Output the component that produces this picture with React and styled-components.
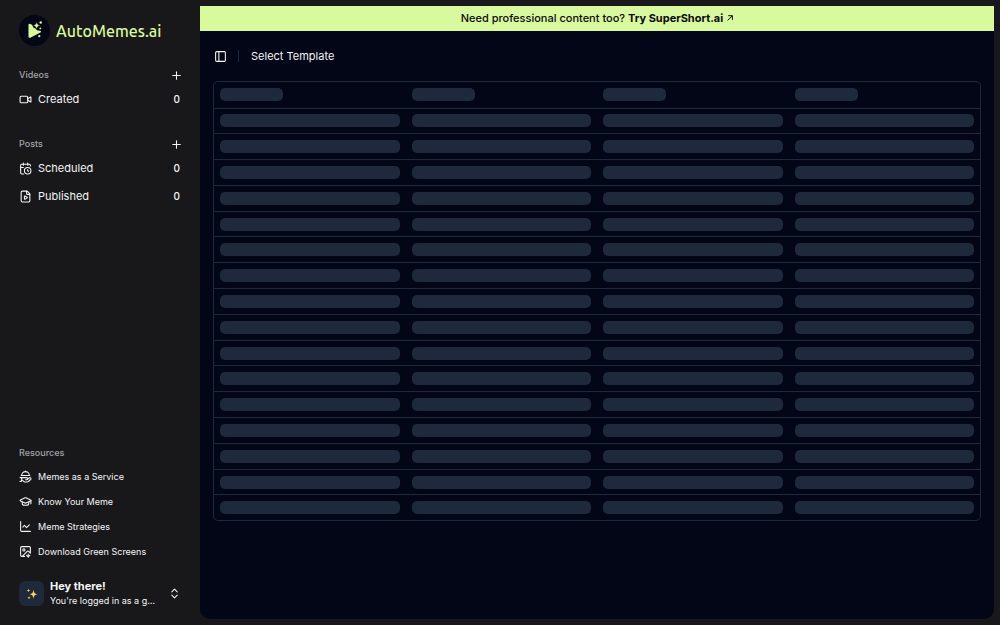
import React from 'react';
import styled, { createGlobalStyle } from 'styled-components';
import {
    CalendarClock,
    ChartLine,
    ChevronsUpDown,
    FilePlay,
    GraduationCap,
    HandPlatter,
    ImageDown,
    PanelLeft,
    Plus,
    Video,
} from 'lucide-react';

const colors = {
    sidebar: '#18181a',
    main: '#020616',
    lime: '#d9f99d',
    slate: '#1e293b',
    text: '#f4f4f5',
    muted: '#a3a3a8',
};

const GlobalStyle = createGlobalStyle`
*{
    box-sizing:border-box;
}

body{
    margin:0;
    background-color:${colors.sidebar};
    color:${colors.text};
    font-family:Inter, sans-serif;
    font-size:11px;
    line-height:16px;
}

a{
    color:inherit;
    text-decoration:none;
}

button{
    display:flex;
    align-items:center;
    padding:0;
    border:0;
    background:none;
    color:inherit;
    font:inherit;
    cursor:pointer;
}
`;

const Layout = styled.div`
display:flex;
min-height:100vh;
`;

const Sidebar = styled.aside`
display:flex;
flex-direction:column;
flex:none;
width:200px;
padding:15px 19px 17px;
`;

const Brand = styled.a`
display:flex;
align-items:center;
gap:6px;
margin-bottom:19px;
color:${colors.lime};
font-family:Ubuntu, "Noto Sans", sans-serif;
font-size:16px;
font-weight:500;
line-height:24px;

svg{
    flex:none;
}
`;

const Group = styled.nav`
margin-bottom:${props => props.$last ? '15px' : '21px'};
margin-top:${props => props.$last ? 'auto' : '0'};
`;

const GroupHeader = styled.div`
display:flex;
align-items:center;
justify-content:space-between;
height:20px;
margin-bottom:${props => props.$tight ? '1px' : '0'};
color:${colors.muted};
font-size:9px;
font-weight:500;

button{
    color:${colors.text};
    margin-right:-2px;
}
`;

const List = styled.ul`
list-style:none;
margin:0;
padding:0;
`;

const Item = styled.li`
height:${props => props.$small ? '25px' : '28px'};
font-size:${props => props.$small ? '9px' : '11px'};

a{
    display:flex;
    align-items:center;
    gap:6px;
    height:100%;
}

svg{
    flex:none;
}
`;

const Count = styled.span`
margin-left:auto;
margin-right:1px;
font-size:10px;
font-weight:500;
`;

const User = styled.button`
width:100%;
gap:6px;
text-align:left;

> svg{
    flex:none;
}
`;

const Avatar = styled.span`
display:flex;
align-items:center;
justify-content:center;
flex:none;
width:25px;
height:25px;
border-radius:6px;
background-color:${colors.slate};
`;

const UserText = styled.span`
flex:1;
min-width:0;
padding-right:4px;
font-size:9px;
line-height:14px;

strong, span{
    display:block;
    overflow:hidden;
    text-overflow:ellipsis;
    white-space:nowrap;
}

strong{
    font-size:11px;
    font-weight:700;
    line-height:15px;
}
`;

const Main = styled.main`
flex:1;
min-width:0;
margin:6px 6px 6px 0;
border-radius:0 0 10px 10px;
background-color:${colors.main};
`;

const Banner = styled.a`
display:flex;
align-items:center;
justify-content:center;
gap:4px;
height:25px;
padding-bottom:1px;
background-color:${colors.lime};
color:#0a0a0a;
font-weight:500;

strong{
    font-weight:700;
}
`;

const TopBar = styled.header`
display:flex;
align-items:center;
height:50px;
padding:0 14px;
`;

const Divider = styled.span`
width:1px;
height:12px;
margin:0 12px 0 11px;
background-color:${colors.slate};
`;

const Title = styled.h1`
margin:0;
font-size:11px;
font-weight:400;
`;

const TableFrame = styled.div`
margin:0 13px;
border:1px solid ${colors.slate};
border-radius:5px;
`;

const Table = styled.table`
width:100%;
height:438px;
table-layout:fixed;
border-collapse:collapse;

th, td{
    padding:0 6px;
}

th{
    height:26px;
}

tbody tr{
    border-top:1px solid ${colors.slate};
}
`;

const Skeleton = styled.div`
width:${props => props.$short ? '63px' : 'auto'};
height:13px;
border-radius:5px;
background-color:${colors.slate};
`;

const columns = [0, 1, 2, 3];
const rows = Array.from({ length: 16 }, (_, i) => i);

const groups = [
    { title: 'Videos', items: [{ name: 'Created', icon: Video, count: 0 }] },
    {
        title: 'Posts',
        items: [
            { name: 'Scheduled', icon: CalendarClock, count: 0 },
            { name: 'Published', icon: FilePlay, count: 0 },
        ],
    },
];

const resources = [
    { name: 'Memes as a Service', icon: HandPlatter },
    { name: 'Know Your Meme', icon: GraduationCap },
    { name: 'Meme Strategies', icon: ChartLine },
    { name: 'Download Green Screens', icon: ImageDown },
];

const Logo = () => (
    <svg width="31" height="31" viewBox="0 0 31 31" aria-hidden="true">
        <circle cx="15.5" cy="15.5" r="15.5" fill={colors.main} />
        <path
            d="M9.500 9.800c0-.9.7-1.300 1.500-.9l2.200.9c.6 2.500 1.700 3.600 3.900 4 .3 1 .8 1.400 1.900 1.600l2.300.3c1 .5 1 1.400.1 1.900l-9.600 5c-1.300.6-2.300 0-2.300-1.200z"
            fill={colors.lime}
        />
        <path
            d="M17.600 6.600c.5 2.800 1.200 3.500 4 4-2.800.5-3.500 1.200-4 4-.5-2.800-1.200-3.500-4-4 2.800-.5 3.500-1.200 4-4z"
            fill={colors.lime}
            stroke={colors.main}
            strokeWidth=".4"
        />
        <circle cx="21.7" cy="7.500" r="1.200" fill={colors.lime} />
        <circle cx="21.300" cy="13.400" r=".9" fill={colors.lime} />
        <circle cx="20.300" cy="21.200" r="1.100" fill={colors.lime} />
    </svg>
);

const Sparkles = () => (
    <svg width="12" height="12" viewBox="0 0 24 24" fill="#fdd63f" aria-hidden="true">
        <path d="M15 3c1 7 2 8 8 9.500-6 1.500-7 2.500-8 9.500-1-7-2-8-8-9.500 6-1.500 7-2.500 8-9.500z" />
        <path d="M5 1c.5 3 1 3.500 4 4-3 .5-3.500 1-4 4-.5-3-1-3.500-4-4 3-.5 3.500-1 4-4z" />
        <path d="M6 16c.4 2.500 1 3 3.500 3.500C7 20 6.400 20.500 6 23c-.4-2.500-1-3-3.500-3.500C5 19 5.600 18.500 6 16z" />
    </svg>
);

const BannerArrow = () => (
    <svg width="6" height="6" viewBox="0 0 6 6" fill="none" stroke="currentColor" aria-hidden="true">
        <path d="M.6 5.400 5.200.8M1.200.7h4.200v4.200" />
    </svg>
);

const NavItem = ({ name, icon: Icon, count, small }) => (
    <Item $small={small}>
        <a href="#">
            <Icon size={13} />
            <span>{name}</span>
            {count !== undefined && <Count>{count}</Count>}
        </a>
    </Item>
);

const App = () => {
    return (<>
        <GlobalStyle />
        <Layout>
            <Sidebar>
                <Brand href="#"><Logo />AutoMemes.ai</Brand>
                {groups.map(group => (
                    <Group key={group.title} aria-label={group.title}>
                        <GroupHeader>
                            {group.title}
                            <button type="button" aria-label={`Add to ${group.title}`}><Plus size={13} /></button>
                        </GroupHeader>
                        <List>
                            {group.items.map(item => <NavItem key={item.name} {...item} />)}
                        </List>
                    </Group>
                ))}
                <Group $last aria-label="Resources">
                    <GroupHeader $tight>Resources</GroupHeader>
                    <List>
                        {resources.map(item => <NavItem key={item.name} {...item} small />)}
                    </List>
                </Group>
                <User type="button">
                    <Avatar><Sparkles /></Avatar>
                    <UserText>
                        <strong>Hey there!</strong>
                        <span>You're logged in as a guest</span>
                    </UserText>
                    <ChevronsUpDown size={13} />
                </User>
            </Sidebar>
            <Main>
                <Banner href="#">
                    <span>Need professional content too? <strong>Try SuperShort.ai</strong></span>
                    <BannerArrow />
                </Banner>
                <TopBar>
                    <button type="button" aria-label="Toggle sidebar"><PanelLeft size={13} /></button>
                    <Divider />
                    <Title>Select Template</Title>
                </TopBar>
                <TableFrame>
                    <Table aria-label="Templates" aria-busy="true">
                        <thead>
                            <tr>{columns.map(col => <th key={col}><Skeleton $short /></th>)}</tr>
                        </thead>
                        <tbody>
                            {rows.map(row => (
                                <tr key={row}>{columns.map(col => <td key={col}><Skeleton /></td>)}</tr>
                            ))}
                        </tbody>
                    </Table>
                </TableFrame>
            </Main>
        </Layout>
    </>);
}

export default App;
